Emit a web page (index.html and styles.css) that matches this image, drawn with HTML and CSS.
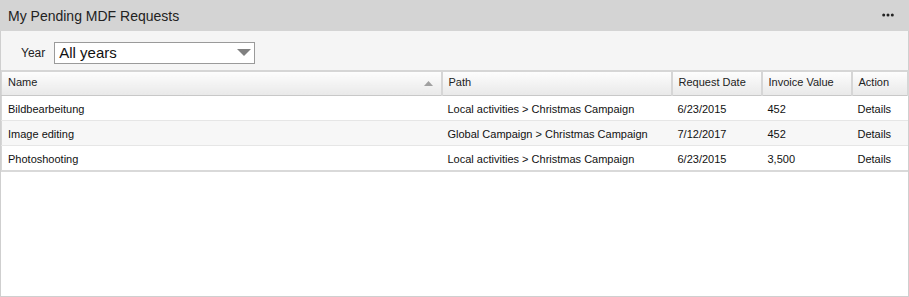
FILE: index.html
```html
<!DOCTYPE html>
<html lang="en">
<head>
    <meta charset="UTF-8">
    <title>My Pending MDF Requests</title>
    <link rel="stylesheet" href="styles.css">
</head>
<body>
    <div class="panel">
        <div class="panel-title">
            <span>My Pending MDF Requests</span>
            <svg class="menu-dots" width="12" height="4" viewBox="0 0 12 4">
                <circle cx="1.7" cy="2" r="1.5" fill="#222"/>
                <circle cx="6" cy="2" r="1.5" fill="#222"/>
                <circle cx="10.3" cy="2" r="1.5" fill="#222"/>
            </svg>
        </div>
        <div class="filter-bar">
            <label for="year">Year</label>
            <div class="select">
                <span>All years</span>
                <svg width="14" height="8" viewBox="0 0 14 8"><polygon points="0,0 14,0 7,7" fill="#808080"/></svg>
            </div>
        </div>
        <div class="panel-body">
            <table class="grid">
                <colgroup>
                    <col class="col-name">
                    <col class="col-path">
                    <col class="col-date">
                    <col class="col-value">
                    <col class="col-action">
                </colgroup>
                <thead>
                    <tr>
                        <th>Name<svg class="sort" width="9" height="5" viewBox="0 0 9 5"><polygon points="4.5,0 9,5 0,5" fill="#a0a0a0"/></svg></th>
                        <th>Path</th>
                        <th>Request Date</th>
                        <th>Invoice Value</th>
                        <th>Action</th>
                    </tr>
                </thead>
                <tbody>
                    <tr>
                        <td>Bildbearbeitung</td>
                        <td>Local activities &gt; Christmas Campaign</td>
                        <td>6/23/2015</td>
                        <td>452</td>
                        <td>Details</td>
                    </tr>
                    <tr class="alt">
                        <td>Image editing</td>
                        <td>Global Campaign &gt; Christmas Campaign</td>
                        <td>7/12/2017</td>
                        <td>452</td>
                        <td>Details</td>
                    </tr>
                    <tr>
                        <td>Photoshooting</td>
                        <td>Local activities &gt; Christmas Campaign</td>
                        <td>6/23/2015</td>
                        <td>3,500</td>
                        <td>Details</td>
                    </tr>
                </tbody>
            </table>
        </div>
    </div>
</body>
</html>
```

FILE: styles.css
```css
body {
    margin: 0;
    font-family: "Liberation Sans", Arial, sans-serif;
    color: #000;
}
.panel {
    width: 909px;
    height: 297px;
    box-sizing: border-box;
    border: 1px solid #cfcfcf;
    border-top: none;
    background: #fff;
    display: flex;
    flex-direction: column;
}
.panel-title {
    height: 31px;
    margin: 0 -1px;
    background: #d4d4d4;
    display: flex;
    align-items: center;
    justify-content: space-between;
    padding: 0 15px 0 8px;
    font-size: 14px;
    color: #222;
}
.menu-dots {
    margin-top: -1px;
}
.filter-bar {
    height: 39px;
    background: #f5f5f5;
    display: flex;
    align-items: center;
    padding: 0 0 0 20px;
    font-size: 12px;
    color: #222;
}
.filter-bar label {
    margin: 4px 9px 0 0;
}
.select {
    width: 201px;
    height: 22px;
    box-sizing: border-box;
    border: 1px solid #9a9a9a;
    background: #fff;
    display: flex;
    align-items: center;
    justify-content: space-between;
    padding: 0 3px 0 4px;
    font-size: 15px;
    color: #111;
    margin-top: 4px;
}
.panel-body {
    flex: 1;
}
.grid {
    width: 906px;
    table-layout: fixed;
    border-collapse: collapse;
    font-size: 11px;
    border-bottom: 2px solid #d9d9d9;
}
.col-name { width: 440px; }
.col-path { width: 230px; }
.col-date { width: 90px; }
.col-value { width: 90px; }
.col-action { width: 56px; }
.grid th {
    height: 20px;
    text-align: left;
    font-weight: normal;
    padding: 0 6px 3px;
    color: #222;
    background: linear-gradient(#fdfdfd, #e9e9e9);
    border-top: 2px solid #d6d6d6;
    border-bottom: 1px solid #c8c8c8;
    border-right: 2px solid #d6d6d6;
    border-left: 1px solid #d6d6d6;
}
.sort {
    float: right;
    margin: 5px 2px 0 0;
}
.grid td {
    height: 22px;
    padding: 2px 6px 0;
    border-bottom: 1px solid #e6e6e6;
    color: #111;
    white-space: nowrap;
}
.grid td:first-child {
    border-left: 1px solid #d6d6d6;
}
.grid tr.alt td {
    background: #f7f7f7;
}
```
